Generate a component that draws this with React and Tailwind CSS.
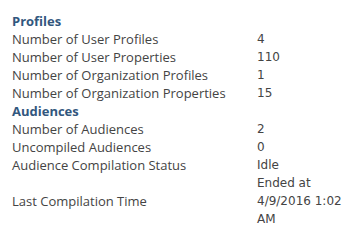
export default function App() {
  const label = "text-[#444444] [font-family:'Open_Sans',sans-serif] text-[13px] leading-[18px]";
  const val = "text-[#444444] [font-family:'DejaVu_Sans',sans-serif] text-[12px] leading-[18px]";
  const head = "col-span-2 text-[#32577e] font-bold [font-family:'Open_Sans',sans-serif] text-[13px] leading-[18px]";
  const rows1 = [
    ["Number of User Profiles", "4"],
    ["Number of User Properties", "110"],
    ["Number of Organization Profiles", "1"],
    ["Number of Organization Properties", "15"],
  ];
  const rows2 = [
    ["Number of Audiences", "2"],
    ["Uncompiled Audiences", "0"],
    ["Audience Compilation Status", "Idle"],
  ];
  return (
    <div className="w-[354px] h-[246px] bg-white pl-[12px] pt-[12px]">
      <div className="grid grid-cols-[245px_97px]">
        <div className={head}>Profiles</div>
        {rows1.map(([a, b]) => (
          <>
            <div className={label}>{a}</div>
            <div className={val}>{b}</div>
          </>
        ))}
        <div className={head}>Audiences</div>
        {rows2.map(([a, b]) => (
          <>
            <div className={label}>{a}</div>
            <div className={val}>{b}</div>
          </>
        ))}
        <div className={label}></div>
        <div className={val}>Ended at</div>
        <div className={label}>Last Compilation Time</div>
        <div className={val}>4/9/2016 1:02 AM</div>
      </div>
    </div>
  );
}
